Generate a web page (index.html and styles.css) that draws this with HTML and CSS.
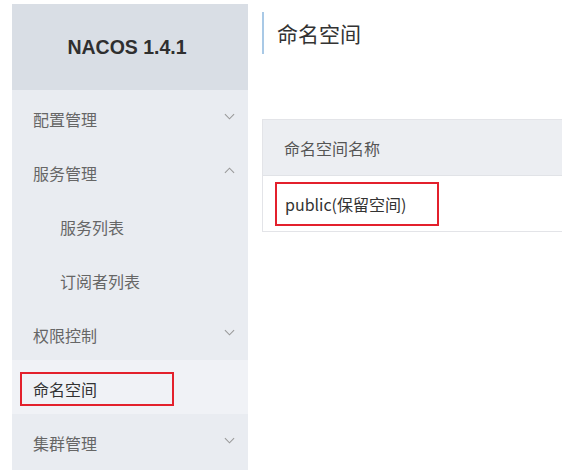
FILE: index.html
```html
<!DOCTYPE html>
<html lang="zh-CN">
<head>
<meta charset="utf-8">
<title>Nacos</title>
<link rel="stylesheet" href="styles.css">
</head>
<body>
<div class="app">
  <aside class="sidebar">
    <div class="brand">NACOS 1.4.1</div>
    <ul class="menu">
      <li class="item"><span>配置管理</span><svg class="chev" viewBox="0 0 12 7"><path d="M1 1l5 5 5-5"/></svg></li>
      <li class="item"><span>服务管理</span><svg class="chev" viewBox="0 0 12 7"><path d="M1 6l5-5 5 5"/></svg></li>
      <li class="item sub"><span>服务列表</span></li>
      <li class="item sub"><span>订阅者列表</span></li>
      <li class="item"><span>权限控制</span><svg class="chev" viewBox="0 0 12 7"><path d="M1 1l5 5 5-5"/></svg></li>
      <li class="item active"><span class="mark side-mark">命名空间</span></li>
      <li class="item"><span>集群管理</span><svg class="chev" viewBox="0 0 12 7"><path d="M1 1l5 5 5-5"/></svg></li>
    </ul>
  </aside>
  <main class="main">
    <div class="title">命名空间</div>
    <div class="table">
      <div class="thead">命名空间名称</div>
      <div class="trow"><span class="mark cell-mark">public(保留空间)</span></div>
    </div>
  </main>
</div>
</body>
</html>
```
FILE: styles.css
```css
* { box-sizing: border-box; }
html, body { margin: 0; padding: 0; background: #fff; }
body {
  font-family: "Noto Sans CJK SC", "Liberation Sans", sans-serif;
  color: #333;
  width: 562px;
  height: 470px;
  overflow: hidden;
}
.app {
  display: flex;
  padding: 4px 0 0 12px;
  height: 470px;
}
.sidebar {
  width: 236px;
  flex: none;
  background: #e9ecf1;
  display: flex;
  flex-direction: column;
}
.brand {
  height: 86px;
  background: #d9dee5;
  display: flex;
  align-items: center;
  justify-content: center;
  font-family: "Liberation Sans", Arial, sans-serif;
  font-weight: bold;
  font-size: 19.5px;
  color: #2f2f2f;
  padding-right: 6px;
}
.menu { list-style: none; margin: 0; padding: 0; }
.item {
  height: 54px;
  display: flex;
  align-items: center;
  justify-content: space-between;
  padding: 0 12px 0 21px;
  font-size: 16px;
  line-height: 20px;
  color: #666;
}
.item span { position: relative; top: 2px; }
.item.sub { padding-left: 48px; }
.item.active { background: #f0f2f6; color: #333; }
.chev {
  width: 11px;
  height: 7px;
  margin-right: 1px;
  position: relative;
  top: -1px;
  fill: none;
  stroke: #9a9a9a;
  stroke-width: 1.2;
}
.mark { outline: 2px solid #e3202c; }
.side-mark {
  display: inline-block;
  width: 150px;
  height: 30px;
  line-height: 30px;
  margin-left: -11px;
  padding-left: 11px;
}
.main {
  flex: 1;
  padding: 8px 0 0 14px;
  min-width: 0;
}
.title {
  border-left: 2px solid #a9c9e6;
  height: 42px;
  padding-left: 13px;
  font-size: 21px;
  line-height: 42px;
  color: #333;
}
.table {
  margin-top: 65px;
  border: 1px solid #e3e4e8;
  border-right: none;
  width: 320px;
}
.thead {
  height: 56px;
  background: #eceef2;
  border-bottom: 1px solid #e1e3e7;
  display: flex;
  align-items: center;
  padding-left: 21px;
  font-size: 16px;
  color: #555;
}
.trow {
  height: 55px;
  display: flex;
  align-items: center;
  padding-left: 14px;
  font-size: 16px;
  color: #333;
}
.cell-mark {
  display: inline-block;
  width: 160px;
  height: 40px;
  line-height: 40px;
  padding-left: 8px;
}
```
